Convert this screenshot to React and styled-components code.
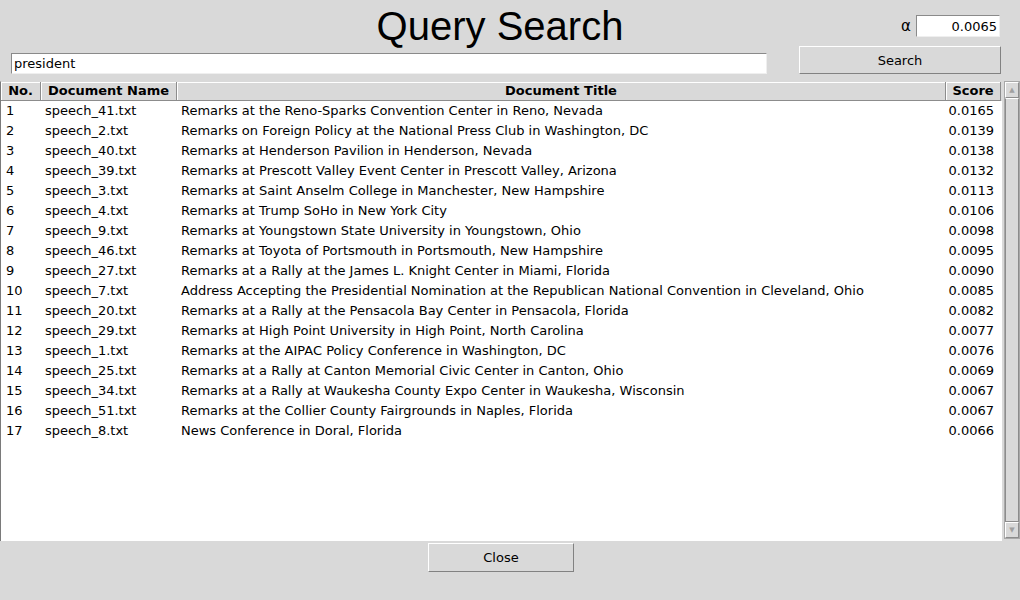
import styled, { createGlobalStyle } from 'styled-components';

const rows = [
  ['speech_41.txt', 'Remarks at the Reno-Sparks Convention Center in Reno, Nevada', '0.0165'],
  ['speech_2.txt', 'Remarks on Foreign Policy at the National Press Club in Washington, DC', '0.0139'],
  ['speech_40.txt', 'Remarks at Henderson Pavilion in Henderson, Nevada', '0.0138'],
  ['speech_39.txt', 'Remarks at Prescott Valley Event Center in Prescott Valley, Arizona', '0.0132'],
  ['speech_3.txt', 'Remarks at Saint Anselm College in Manchester, New Hampshire', '0.0113'],
  ['speech_4.txt', 'Remarks at Trump SoHo in New York City', '0.0106'],
  ['speech_9.txt', 'Remarks at Youngstown State University in Youngstown, Ohio', '0.0098'],
  ['speech_46.txt', 'Remarks at Toyota of Portsmouth in Portsmouth, New Hampshire', '0.0095'],
  ['speech_27.txt', 'Remarks at a Rally at the James L. Knight Center in Miami, Florida', '0.0090'],
  ['speech_7.txt', 'Address Accepting the Presidential Nomination at the Republican National Convention in Cleveland, Ohio', '0.0085'],
  ['speech_20.txt', 'Remarks at a Rally at the Pensacola Bay Center in Pensacola, Florida', '0.0082'],
  ['speech_29.txt', 'Remarks at High Point University in High Point, North Carolina', '0.0077'],
  ['speech_1.txt', 'Remarks at the AIPAC Policy Conference in Washington, DC', '0.0076'],
  ['speech_25.txt', 'Remarks at a Rally at Canton Memorial Civic Center in Canton, Ohio', '0.0069'],
  ['speech_34.txt', 'Remarks at a Rally at Waukesha County Expo Center in Waukesha, Wisconsin', '0.0067'],
  ['speech_51.txt', 'Remarks at the Collier County Fairgrounds in Naples, Florida', '0.0067'],
  ['speech_8.txt', 'News Conference in Doral, Florida', '0.0066'],
];

const GlobalStyle = createGlobalStyle`
  body {
    margin: 0;
    background: #d9d9d9;
    font-family: 'DejaVu Sans', sans-serif;
    font-size: 13px;
    color: #000;
  }
`;

const Window = styled.div`
  width: 1020px;
  height: 600px;
  background: #d9d9d9;
  display: flex;
  flex-direction: column;
  overflow: hidden;
`;

const TitleRow = styled.div`
  height: 46px;
  display: grid;
  grid-template-columns: 1fr auto 1fr;
  padding-right: 20px;
`;

const Title = styled.h1`
  grid-column: 2;
  margin: 0;
  padding-top: 3px;
  font-family: 'Liberation Sans', Arial, sans-serif;
  font-weight: normal;
  font-size: 40px;
  line-height: 46px;
`;

const AlphaBox = styled.div`
  grid-column: 3;
  justify-self: end;
  display: flex;
  align-items: center;
  gap: 5px;
  margin-top: 15px;
  height: 22px;
  font-size: 15px;
`;

const Entry = styled.div`
  box-sizing: border-box;
  width: ${p => p.$width}px;
  height: ${p => p.$height || 21}px;
  margin-top: ${p => p.$top || 0}px;
  background: #fff;
  border: 1px solid;
  border-color: #8a8a8a #efefef #efefef #8a8a8a;
  padding: 0 2px;
  display: flex;
  align-items: center;
  justify-content: ${p => (p.$right ? 'flex-end' : 'flex-start')};
  font-size: 13px;
`;

const SearchRow = styled.div`
  height: 35px;
  display: flex;
  align-items: flex-start;
  padding-left: 11px;
  gap: 32px;
`;

const Button = styled.button`
  box-sizing: border-box;
  width: ${p => p.$width}px;
  height: ${p => p.$height || 28}px;
  background: #d9d9d9;
  border: 1px solid;
  border-color: #fff #828282 #828282 #fff;
  font-family: 'DejaVu Sans', sans-serif;
  font-size: 13px;
  color: #000;
  padding: 0;
`;

const TableArea = styled.div`
  height: 460px;
  display: flex;
`;

const Tree = styled.div`
  box-sizing: border-box;
  width: 1002px;
  background: #fff;
  border-left: 1px solid #7a7a7a;
  border-top: 1px solid #d9d9d9;
`;

const cols = '40px 136px 769px 55px';

const HeaderRow = styled.div`
  display: grid;
  grid-template-columns: ${cols};
  height: 19px;
  background: #d9d9d9;
`;

const HeaderCell = styled.div`
  box-sizing: border-box;
  font-weight: bold;
  text-align: center;
  line-height: 18px;
  border-right: 1px solid #8c8c8c;
  border-bottom: 1px solid #8c8c8c;
  box-shadow: inset 1px 1px 0 #fff;
`;

const Row = styled.div`
  display: grid;
  grid-template-columns: ${cols};
  height: 20px;
  line-height: 20px;
`;

const Cell = styled.div`
  white-space: nowrap;
  overflow: hidden;
  padding: ${p => (p.$right ? '0 7px 0 0' : `0 0 0 ${p.$pad || 4}px`)};
  text-align: ${p => (p.$right ? 'right' : 'left')};
`;

const Scrollbar = styled.div`
  box-sizing: border-box;
  width: 16px;
  margin-left: 2px;
  height: 458px;
  display: flex;
  flex-direction: column;
  border: 1px solid #a8a8a8;
`;

const Arrow = styled.div`
  height: 14px;
  display: flex;
  align-items: center;
  justify-content: center;
  border: 1px solid;
  border-color: #fff #8c8c8c #8c8c8c #fff;
  color: #a0a0a0;
  font-size: 7px;
`;

const Thumb = styled.div`
  flex: 1;
  border: 1px solid;
  border-color: #fff #8c8c8c #8c8c8c #8c8c8c;
  background: #d9d9d9;
`;

const Footer = styled.div`
  flex: 1;
  display: flex;
  justify-content: center;
  padding-top: 2px;
  padding-right: 18px;
`;

const App = () => (
  <Window>
    <GlobalStyle />
    <TitleRow>
      <Title>Query Search</Title>
      <AlphaBox>
        <span>α</span>
        <Entry $width={84} $height={22} $right>0.0065</Entry>
      </AlphaBox>
    </TitleRow>
    <SearchRow>
      <Entry $width={756} $top={7}>president</Entry>
      <Button $width={202}>Search</Button>
    </SearchRow>
    <TableArea>
      <Tree>
        <HeaderRow>
          <HeaderCell>No.</HeaderCell>
          <HeaderCell>Document Name</HeaderCell>
          <HeaderCell>Document Title</HeaderCell>
          <HeaderCell>Score</HeaderCell>
        </HeaderRow>
        {rows.map(([name, title, score], i) => (
          <Row key={name}>
            <Cell $pad={5}>{i + 1}</Cell>
            <Cell>{name}</Cell>
            <Cell>{title}</Cell>
            <Cell $right>{score}</Cell>
          </Row>
        ))}
      </Tree>
      <Scrollbar>
        <Arrow>▲</Arrow>
        <Thumb />
        <Arrow>▼</Arrow>
      </Scrollbar>
    </TableArea>
    <Footer>
      <Button $width={146} $height={29}>Close</Button>
    </Footer>
  </Window>
);

export default App;
